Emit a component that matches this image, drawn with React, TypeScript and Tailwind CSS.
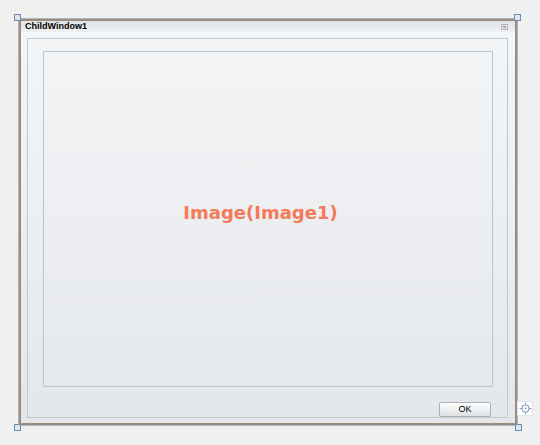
import React from 'react';

function Handle({ className }: { className: string }) {
  return <div className={`absolute w-[7px] h-[7px] border border-[#6d8bad] bg-[#dde5ee] ${className}`} />;
}

export default function App() {
  return (
    <div className="relative w-[540px] h-[445px] bg-[#f0f0f0] pt-[18px] pl-[18px] font-['Liberation_Sans',sans-serif]">
      {/* Window */}
      <div className="w-[500px] h-[408px] border border-[#a9b6c4]">
        <div className="flex flex-col h-full border-2 border-[#9e8c78]">
          {/* Title bar */}
          <div className="flex items-center justify-between h-[11px] px-[4px] bg-gradient-to-b from-[#e0e3e7] to-[#eef0f2]">
            <span className="text-[9px] leading-none font-bold text-black">ChildWindow1</span>
            <svg width="7" height="6" viewBox="0 0 7 6" className="mr-[3px]">
              <rect x="0.5" y="0.5" width="6" height="5" fill="none" stroke="#b5b5b5" strokeWidth="1" />
              <path d="M2 2 L5 4 M5 2 L2 4" stroke="#9a9a9a" strokeWidth="1" />
            </svg>
          </div>

          {/* Body */}
          <div className="flex-1 flex flex-col bg-gradient-to-b from-[#f4f5f7] to-[#e4e7ea] pt-[6px] pl-[6px] pr-[7px] pb-[5px]">
            <div className="flex-1 flex flex-col border border-[#bccad6] pt-[12px] pl-[15px] pr-[14px]">
              <div className="h-[336px] flex items-center justify-center border border-[#b8c6d2]">
                <span className="font-['DejaVu_Sans',sans-serif] font-bold text-[18px] text-[#f47a58] -mt-[14px] mr-[15px]">
                  Image(Image1)
                </span>
              </div>
              <div className="flex justify-end mt-[15px] pr-[2px]">
                <button className="w-[52px] h-[15px] rounded-[2px] border border-[#a9b1ba] bg-gradient-to-b from-[#ffffff] to-[#dde1e5] text-[9px] leading-none text-black shadow-[0_1px_0_#c8ced5]">
                  OK
                </button>
              </div>
            </div>
          </div>
        </div>
      </div>

      {/* Selection handles */}
      <Handle className="left-[14px] top-[14px]" />
      <Handle className="left-[514px] top-[14px]" />
      <Handle className="left-[14px] top-[424px]" />
      <Handle className="left-[515px] top-[424px]" />

      {/* Move gizmo */}
      <div className="absolute left-[517px] top-[401px] w-[16px] h-[15px] bg-white border border-[#e2e6ea] flex items-center justify-center">
        <svg width="13" height="13" viewBox="0 0 13 13">
          <circle cx="6.5" cy="6.5" r="3.5" fill="none" stroke="#7f9fc7" strokeWidth="1.2" />
          <circle cx="6.5" cy="6.5" r="1" fill="#7f9fc7" />
          <path d="M6.5 0.5 V3 M6.5 10 V12.5 M0.5 6.5 H3 M10 6.5 H12.5" stroke="#7f9fc7" strokeWidth="1" />
        </svg>
      </div>
    </div>
  );
}
